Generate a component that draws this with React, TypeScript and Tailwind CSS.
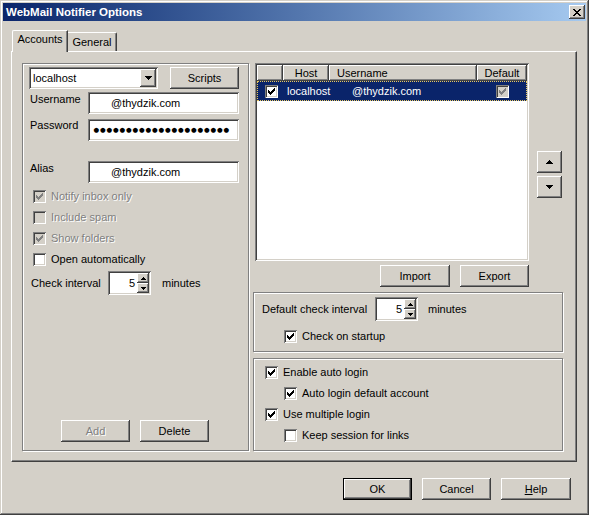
import React from "react";

// classic 3D edges
const raised =
  "bg-[#d4d0c8] shadow-[inset_-1px_-1px_0_#404040,inset_1px_1px_0_#ffffff,inset_-2px_-2px_0_#808080]";
const sunken =
  "shadow-[inset_1px_1px_0_#808080,inset_-1px_-1px_0_#ffffff,inset_2px_2px_0_#404040,inset_-2px_-2px_0_#d4d0c8]";
const etched = "border border-[#808080] shadow-[inset_1px_1px_0_#ffffff,1px_1px_0_#ffffff]";
const grayText = "text-[#808080] [text-shadow:1px_1px_0_#ffffff]";

function CheckMark({ color }: { color: string }) {
  const ys = [2, 3, 4, 3, 2, 1, 0];
  return (
    <svg width="7" height="7" viewBox="0 0 7 7" shapeRendering="crispEdges">
      {ys.map((y, x) => (
        <rect key={x} x={x} y={y} width="1" height="3" fill={color} />
      ))}
    </svg>
  );
}

function Check({ checked, disabled }: { checked?: boolean; disabled?: boolean }) {
  return (
    <div
      className={
        "flex h-[13px] w-[13px] shrink-0 items-center justify-center " +
        (disabled ? "bg-[#d4d0c8] " : "bg-white ") +
        sunken
      }
    >
      {checked && <CheckMark color={disabled ? "#808080" : "#000000"} />}
    </div>
  );
}

function Tri({ dir, big }: { dir: "up" | "down"; big?: boolean }) {
  const rows = big ? [7, 5, 3, 1] : [5, 3, 1];
  const w = rows[0];
  const list = dir === "up" ? [...rows].reverse() : rows;
  return (
    <svg width={w} height={list.length} viewBox={`0 0 ${w} ${list.length}`} shapeRendering="crispEdges">
      {list.map((n, i) => (
        <rect key={i} x={(w - n) / 2} y={i} width={n} height="1" fill="#000" />
      ))}
    </svg>
  );
}

function Btn({
  label,
  w,
  disabled,
  primary,
}: {
  label: React.ReactNode;
  w: string;
  disabled?: boolean;
  primary?: boolean;
}) {
  return (
    <div
      className={
        "flex h-[22px] items-center justify-center " +
        w +
        " " +
        raised +
        (primary ? " border border-black" : "") +
        (disabled ? " " + grayText : "")
      }
    >
      {label}
    </div>
  );
}

function Spin({ value }: { value: string }) {
  return (
    <div className={"flex h-[24px] w-[43px] shrink-0 bg-white p-[2px] " + sunken}>
      <div className="flex flex-1 items-center justify-end pr-[2px]">{value}</div>
      <div className="flex w-[12px] flex-col">
        <div className={"flex h-[10px] items-center justify-center " + raised}>
          <Tri dir="up" />
        </div>
        <div className={"flex h-[10px] items-center justify-center " + raised}>
          <Tri dir="down" />
        </div>
      </div>
    </div>
  );
}

function Field({ children, pl }: { children: React.ReactNode; pl: string }) {
  return (
    <div className={"flex h-[22px] w-[151px] items-center bg-white " + pl + " " + sunken}>
      {children}
    </div>
  );
}

function CheckRow({
  label,
  checked,
  disabled,
  indent,
}: {
  label: string;
  checked?: boolean;
  disabled?: boolean;
  indent?: string;
}) {
  return (
    <div className={"flex h-[13px] items-center gap-[5px] " + (indent ?? "")}>
      <Check checked={checked} disabled={disabled} />
      <span className={disabled ? grayText : ""}>{label}</span>
    </div>
  );
}

function HeadCell({ w, children, center }: { w: string; children?: React.ReactNode; center?: boolean }) {
  return (
    <div
      className={
        "flex h-[16px] items-center " +
        w +
        " " +
        (center ? "justify-center " : "pl-[8px] ") +
        raised
      }
    >
      {children}
    </div>
  );
}

export default function App() {
  return (
    <div
      className={
        "flex h-[515px] w-[589px] flex-col bg-[#d4d0c8] p-[3px] font-['Liberation_Sans',Arial,sans-serif] text-[11px] leading-[13px] text-black shadow-[inset_-1px_-1px_0_#404040,inset_1px_1px_0_#d4d0c8,inset_-2px_-2px_0_#808080,inset_2px_2px_0_#ffffff]"
      }
    >
      {/* Title bar */}
      <div className="flex h-[18px] items-center justify-between bg-linear-to-r from-[#0a246a] to-[#a6caf0] pl-[3px] pr-[1px]">
        <span className="text-[11.5px] font-bold text-white">WebMail Notifier Options</span>
        <div className={"flex h-[14px] w-[16px] items-center justify-center " + raised}>
          <svg width="8" height="7" viewBox="0 0 8 7" shapeRendering="crispEdges">
            {[
              [0, 6],
              [1, 5],
              [2, 4],
              [3, 3],
              [2, 4],
              [1, 5],
              [0, 6],
            ].map(([a, b], y) => (
              <g key={y}>
                <rect x={a} y={y} width="2" height="1" fill="#000" />
                {a !== b && <rect x={b} y={y} width="2" height="1" fill="#000" />}
              </g>
            ))}
          </svg>
        </div>
      </div>

      <div className="flex flex-col px-[8px] pt-[9px]">
        {/* Tabs */}
        <div className="flex h-[21px] items-end pl-[1px]">
          <div className="relative z-10 -mb-px flex h-[22px] w-[56px] justify-center rounded-tl-[2px] border-l border-t border-r border-l-white border-t-white border-r-[#404040] bg-[#d4d0c8] pt-[2px] shadow-[inset_-1px_0_0_#808080]">
            Accounts
          </div>
          <div className="flex h-[19px] w-[49px] justify-center rounded-tr-[2px] border-t border-r border-t-white border-r-[#404040] pt-[3px] shadow-[inset_-1px_0_0_#808080]">
            General
          </div>
        </div>

        {/* Tab panel */}
        <div className="flex h-[411px] w-[566px] gap-[4px] border border-t-white border-l-white border-r-[#404040] border-b-[#404040] pl-[10px] pt-[11px] shadow-[inset_-1px_-1px_0_#808080]">
          {/* Account details */}
          <div className={"flex h-[388px] w-[227px] flex-col pl-[6px] pt-[3px] " + etched}>
            <div className="flex h-[22px] gap-[12px]">
              <div className={"flex h-[22px] w-[129px] items-center bg-white p-[2px] " + sunken}>
                <span className="flex-1 pl-[2px]">localhost</span>
                <div className={"flex h-[18px] w-[16px] items-center justify-center " + raised}>
                  <Tri dir="down" big />
                </div>
              </div>
              <Btn label="Scripts" w="w-[69px]" />
            </div>

            <div className="mt-[3px] flex h-[22px]">
              <span className="w-[59px] pl-[1px] pt-[1px]">Username</span>
              <Field pl="pl-[23px]">@thydzik.com</Field>
            </div>
            <div className="mt-[5px] flex h-[22px]">
              <span className="w-[59px] pl-[1px]">Password</span>
              <Field pl="pl-[5px]">
                {Array.from({ length: 21 }).map((_, i) => (
                  <span key={i} className="w-[6.5px] text-center font-['DejaVu_Sans'] text-[6.5px] leading-none">
                    ●
                  </span>
                ))}
              </Field>
            </div>
            <div className="mt-[20px] flex h-[22px]">
              <span className="w-[59px] pl-[1px] pt-[1px]">Alias</span>
              <Field pl="pl-[23px]">@thydzik.com</Field>
            </div>

            <div className="mt-[7px] flex flex-col gap-[8px] pl-[4px]">
              <CheckRow label="Notify inbox only" checked disabled />
              <CheckRow label="Include spam" disabled />
              <CheckRow label="Show folders" checked disabled />
              <CheckRow label="Open automatically" />
            </div>

            <div className="mt-[5px] flex h-[24px] items-center">
              <span className="w-[79px] pl-[2px]">Check interval</span>
              <Spin value="5" />
              <span className="ml-[11px]">minutes</span>
            </div>

            <div className="mt-auto mb-[8px] flex gap-[10px] pl-[32px]">
              <Btn label="Add" w="w-[69px]" disabled />
              <Btn label="Delete" w="w-[69px]" />
            </div>
          </div>

          {/* Accounts list and options */}
          <div className="flex w-[310px] flex-col">
            <div className="flex">
              <div className={"ml-[2px] flex h-[198px] w-[274px] flex-col bg-white p-[2px] " + sunken}>
                <div className="flex">
                  <HeadCell w="w-[26px]" />
                  <HeadCell w="w-[46px]" center>
                    Host
                  </HeadCell>
                  <HeadCell w="w-[148px]">Username</HeadCell>
                  <HeadCell w="w-[50px]" center>
                    Default
                  </HeadCell>
                </div>
                <div className="flex h-[20px] items-center bg-[#0a246a] text-white outline-1 -outline-offset-1 outline-dotted outline-[#e8c860]">
                  <div className="flex w-[26px] pl-[8px]">
                    <Check checked />
                  </div>
                  <div className="w-[46px] pl-[4px]">localhost</div>
                  <div className="w-[148px] pl-[23px]">@thydzik.com</div>
                  <div className="flex w-[50px] justify-center">
                    <Check checked disabled />
                  </div>
                </div>
              </div>
              <div className="ml-[8px] flex flex-col gap-[3px] pt-[88px]">
                <div className={"flex h-[22px] w-[25px] items-center justify-center " + raised}>
                  <Tri dir="up" big />
                </div>
                <div className={"flex h-[22px] w-[25px] items-center justify-center " + raised}>
                  <Tri dir="down" big />
                </div>
              </div>
            </div>

            <div className="mt-[4px] flex w-[276px] justify-end gap-[10px]">
              <Btn label="Import" w="w-[70px]" />
              <Btn label="Export" w="w-[69px]" />
            </div>

            <div className={"mt-[5px] flex h-[60px] w-[310px] flex-col pl-[8px] pt-[4px] " + etched}>
              <div className="flex h-[24px] items-center">
                <span className="w-[113px]">Default check interval</span>
                <Spin value="5" />
                <span className="ml-[10px]">minutes</span>
              </div>
              <div className="mt-[9px]">
                <CheckRow label="Check on startup" checked indent="ml-[22px]" />
              </div>
            </div>

            <div className={"mt-[6px] flex h-[93px] w-[310px] flex-col gap-[8px] pl-[11px] pt-[7px] " + etched}>
              <CheckRow label="Enable auto login" checked />
              <CheckRow label="Auto login default account" checked indent="ml-[19px]" />
              <CheckRow label="Use multiple login" checked />
              <CheckRow label="Keep session for links" indent="ml-[19px]" />
            </div>
          </div>
        </div>

        {/* Dialog buttons */}
        <div className="mt-[16px] flex justify-end gap-[10px] pr-[7px]">
          <Btn label="OK" w="w-[69px]" primary />
          <Btn label="Cancel" w="w-[69px]" />
          <Btn
            label={
              <span>
                <span className="underline">H</span>elp
              </span>
            }
            w="w-[70px]"
          />
        </div>
      </div>
    </div>
  );
}
